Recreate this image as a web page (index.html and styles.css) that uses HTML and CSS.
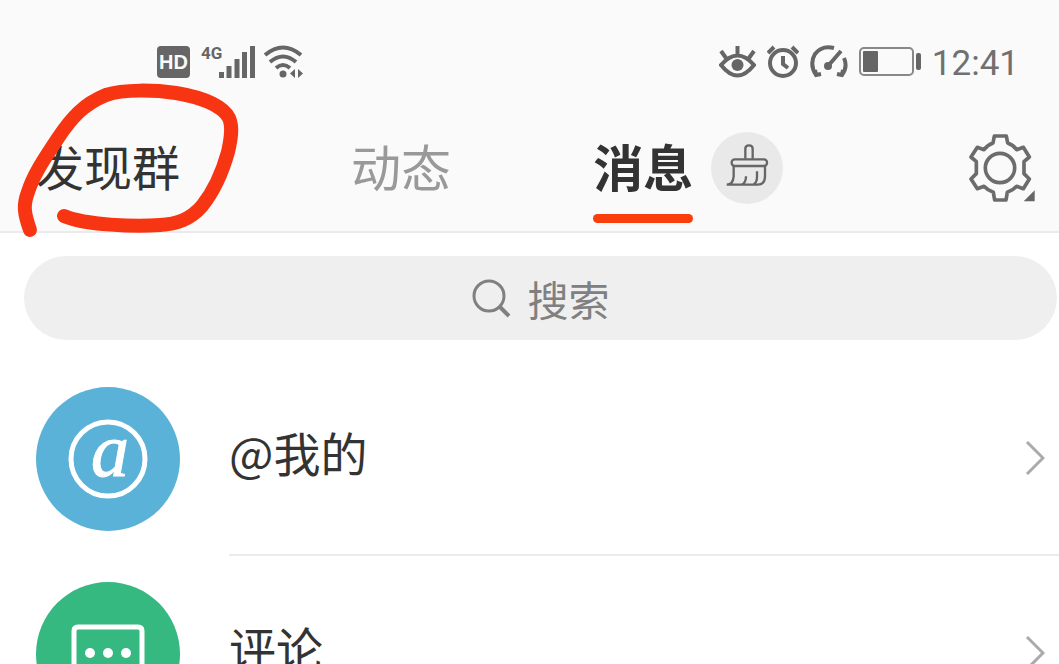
FILE: index.html
```html
<!DOCTYPE html>
<html lang="zh-CN">
<head>
  <meta charset="UTF-8" />
  <meta name="viewport" content="width=device-width, initial-scale=1.0" />
  <title>消息</title>
  <link rel="stylesheet" href="styles.css">
</head>
<body>
  <header class="header">
    <!-- Status bar -->
    <div class="status-bar">
      <div class="status-group">
        <span class="hd">HD</span>
        <span class="network">4G</span>
        <svg class="signal" width="36" height="34" viewBox="0 0 36 34">
          <path d="M2.500 27v6M10 21v12M18 14v19M25.500 7v26M33.500 1v32" />
        </svg>
        <svg class="wifi" width="42" height="34" viewBox="0 0 42 34">
          <path d="M2 10Q20-5 38 10M7 17Q20 6 33 17M13 23Q20 17 27 23" />
          <circle cx="20" cy="29" r="3.500" />
          <path class="fill" d="M32 24v9l-5-4.500zM35 24v9l5-4.500z" />
        </svg>
      </div>
      <div class="status-group status-right">
        <svg class="line-icon" width="37" height="34" viewBox="0 0 37 34">
          <path d="M2 20Q18.500 1 35 20Q18.500 41 2 20zM18.500 9V1M7 13L2 6M30 13l5-7" />
          <circle class="fill" cx="18.500" cy="20" r="6" />
        </svg>
        <svg class="line-icon" width="32" height="34" viewBox="0 0 32 34">
          <circle cx="16" cy="18" r="13" />
          <path d="M16 11v8l5 4M1 8l6-6M31 8l-6-6" />
        </svg>
        <svg class="line-icon" width="38" height="34" viewBox="0 0 38 34">
          <path d="M24 3Q12 0 5 9Q-1 19 6 30l5-1M6 30l-1-5M34 13Q38 22 32 30l-5-1M32 30l1-5" />
          <path d="M18 21L31 6" />
          <circle class="fill" cx="18" cy="21" r="4" />
        </svg>
        <svg class="battery" width="62" height="30" viewBox="0 0 62 30">
          <rect class="case" x="1" y="1" width="53" height="27" rx="4" />
          <rect x="4" y="4" width="15" height="21" rx="1" />
          <rect x="57" y="6" width="5" height="17" rx="2" />
        </svg>
        <time class="clock">12:41</time>
      </div>
    </div>

    <!-- Tabs -->
    <nav class="tabs">
      <div class="tab-cell"><button class="tab tab-group">发现群</button></div>
      <div class="tab-cell"><button class="tab">动态</button></div>
      <div class="tab-cell">
        <button class="tab active">消息</button>
        <button class="clean-btn" aria-label="清除未读">
          <svg width="72" height="72" viewBox="422 32 216 216">
            <path d="M525 112V82Q525 72 536 72Q547 72 547 82V112" />
            <rect x="484" y="114" width="106" height="20" rx="9" />
            <path d="M490 134V165Q488 190 469 190H562Q584 190 584 165V134M527 165Q527 184 515 190M560 150V168Q560 184 549 190" />
          </svg>
        </button>
      </div>
      <button class="settings-btn" aria-label="设置">
        <svg width="68" height="70" viewBox="54 36 204 210">
          <path d="M133 45H169L173 66Q190 72 200 86L220 79L238 108L222 122V158L238 174L220 203L200 196Q188 209 172 214L168 237H134L130 214Q114 209 102 196L82 203L63 174L79 158V122L63 108L82 79L102 86Q112 72 129 66Z" />
          <circle cx="150" cy="141" r="44" />
          <path class="corner" d="M221 241H254V208Z" />
        </svg>
      </button>
    </nav>

    <!-- Hand-drawn mark around the first tab -->
    <svg class="mark" width="260" height="170" viewBox="0 0 260 170">
      <path d="M30 155C24 138 23 130 28 117C34 98 47 80 58 63C72 42 84 29 106 20C124 14 155 15 176 18C200 22 222 30 229 43C233 52 231 64 228 77C223 95 214 116 202 131C190 145 176 149 160 150C135 152 85 150 64 141" />
    </svg>
  </header>

  <main>
    <div class="search-wrap">
      <label class="search">
        <svg width="40" height="40" viewBox="0 0 40 40">
          <circle cx="17" cy="18" r="15" />
          <path class="handle" d="M28 29L37 38" />
        </svg>
        <input type="text" placeholder="搜索" aria-label="搜索" />
      </label>
    </div>

    <div class="list">
      <a class="row" href="#">
        <span class="icon at">
          <svg width="144" height="144" viewBox="0 0 144 144">
            <circle cx="72" cy="72" r="37" />
            <text x="74" y="89" text-anchor="middle">a</text>
          </svg>
        </span>
        <span class="row-body">
          <span class="row-title">@我的</span>
          <svg class="arrow" width="20" height="36" viewBox="0 0 20 36"><path d="M2 2L18 18L2 34" /></svg>
        </span>
      </a>
      <a class="row" href="#">
        <span class="icon comment">
          <svg width="144" height="144" viewBox="0 0 144 144">
            <path d="M42 45H102Q106 45 106 49V96Q106 100 102 100H82L72 110L62 100H42Q38 100 38 96V49Q38 45 42 45Z" />
            <circle class="dot" cx="54" cy="71" r="5" />
            <circle class="dot" cx="72" cy="71" r="5" />
            <circle class="dot" cx="90" cy="71" r="5" />
          </svg>
        </span>
        <span class="row-body">
          <span class="row-title">评论</span>
          <svg class="arrow" width="20" height="36" viewBox="0 0 20 36"><path d="M2 2L18 18L2 34" /></svg>
        </span>
      </a>
    </div>
  </main>
</body>
</html>
```
FILE: styles.css
```css
* {
  box-sizing: border-box;
}

body {
  margin: 0;
  height: 100vh;
  overflow: hidden;
  background-color: #fff;
  color: #333;
  font-family: "Noto Sans CJK SC", sans-serif;
}

svg {
  display: block;
  flex: none;
  fill: none;
}

button {
  padding: 0;
  border: none;
  background: none;
  color: inherit;
  font: inherit;
  cursor: pointer;
}

.header {
  position: relative;
  background-color: #fafafa;
  border-bottom: 2px solid #ebebeb;
}

/* Status bar */
.status-bar {
  display: flex;
  justify-content: space-between;
  align-items: center;
  padding: 38px 40px 19px 157px;
  height: 105px;
  color: #666;
}

.status-group {
  display: flex;
  align-items: center;
}

.status-right {
  gap: 11px;
}

.hd {
  width: 33px;
  line-height: 32px;
  margin-right: 11px;
  border-radius: 4px;
  background-color: #666;
  color: #fafafa;
  font-family: "Liberation Sans", sans-serif;
  font-size: 20px;
  font-weight: bold;
  text-align: center;
}

.network {
  align-self: flex-start;
  width: 18px;
  font: bold 17px/16px Roboto, sans-serif;
}

.signal {
  stroke: #666;
  stroke-width: 5;
}

.wifi {
  margin-left: 8px;
  stroke: #666;
  stroke-width: 4;
}

.wifi circle,
.wifi .fill {
  fill: #666;
  stroke: none;
}

.line-icon {
  stroke: #666;
  stroke-width: 4;
}

.line-icon .fill {
  fill: #666;
  stroke: none;
}

.battery {
  fill: #666;
}

.battery .case {
  fill: none;
  stroke: #888;
  stroke-width: 2;
}

.clock {
  padding-top: 4px;
  color: #707070;
  font: 35px/44px Roboto, sans-serif;
}

/* Tabs */
.tabs {
  display: grid;
  grid-template-columns: 338fr 260fr 402fr auto;
  align-items: center;
  padding: 8px 23px 8px 36px;
}

.tab-cell {
  display: flex;
  align-items: center;
  gap: 18px;
}

.tab {
  padding-top: 22px;
  color: #999;
  font-size: 50px;
  line-height: 60px;
}

.tab::after {
  content: "";
  display: block;
  height: 9px;
  margin-top: 19px;
  border-radius: 5px;
}

.tab-group {
  color: #333;
  font-size: 48px;
}

.tab.active {
  color: #333;
  font-weight: bold;
}

.tab.active::after {
  background-color: #f93e0b;
}

.clean-btn {
  border-radius: 50%;
  background-color: #e9e9e9;
}

.clean-btn svg {
  stroke: #666;
  stroke-width: 7;
}

.settings-btn svg {
  stroke: #6c6c6c;
  stroke-width: 11;
  stroke-linejoin: round;
}

.settings-btn .corner {
  fill: #666;
  stroke: none;
}

.mark {
  position: absolute;
  left: 0;
  top: 75px;
  stroke: #f73512;
  stroke-width: 14;
  stroke-linecap: round;
  stroke-linejoin: round;
  pointer-events: none;
}

/* Search */
.search-wrap {
  padding: 23px 2px 21px 24px;
}

.search {
  display: flex;
  justify-content: center;
  align-items: center;
  gap: 16px;
  height: 84px;
  border-radius: 42px;
  background-color: #efefef;
}

.search svg {
  stroke: #808080;
  stroke-width: 3;
}

.search .handle {
  stroke-width: 4;
}

.search input {
  width: 82px;
  padding: 0;
  border: none;
  outline: none;
  background: none;
  color: #333;
  font: inherit;
  font-size: 41px;
}

.search input::placeholder {
  color: #808080;
}

/* List */
.row {
  display: flex;
  align-items: center;
  gap: 49px;
  padding-left: 36px;
  color: #333;
  font-size: 47px;
  text-decoration: none;
}

.icon {
  border-radius: 50%;
}

.icon svg {
  stroke: #fff;
  stroke-width: 5;
}

.icon text {
  fill: #fff;
  stroke-width: 1;
  font: italic 76px "Liberation Serif", serif;
}

.icon .dot {
  fill: #fff;
  stroke: none;
}

.at {
  background-color: #5ab2d9;
}

.comment {
  background-color: #36b881;
}

.row-body {
  flex: 1;
  display: flex;
  justify-content: space-between;
  align-items: center;
  height: 195px;
  padding-right: 14px;
  border-bottom: 2px solid #ebebeb;
}

.row-title {
  padding-bottom: 12px;
}

.arrow {
  stroke: #aaa;
  stroke-width: 3;
}
```
